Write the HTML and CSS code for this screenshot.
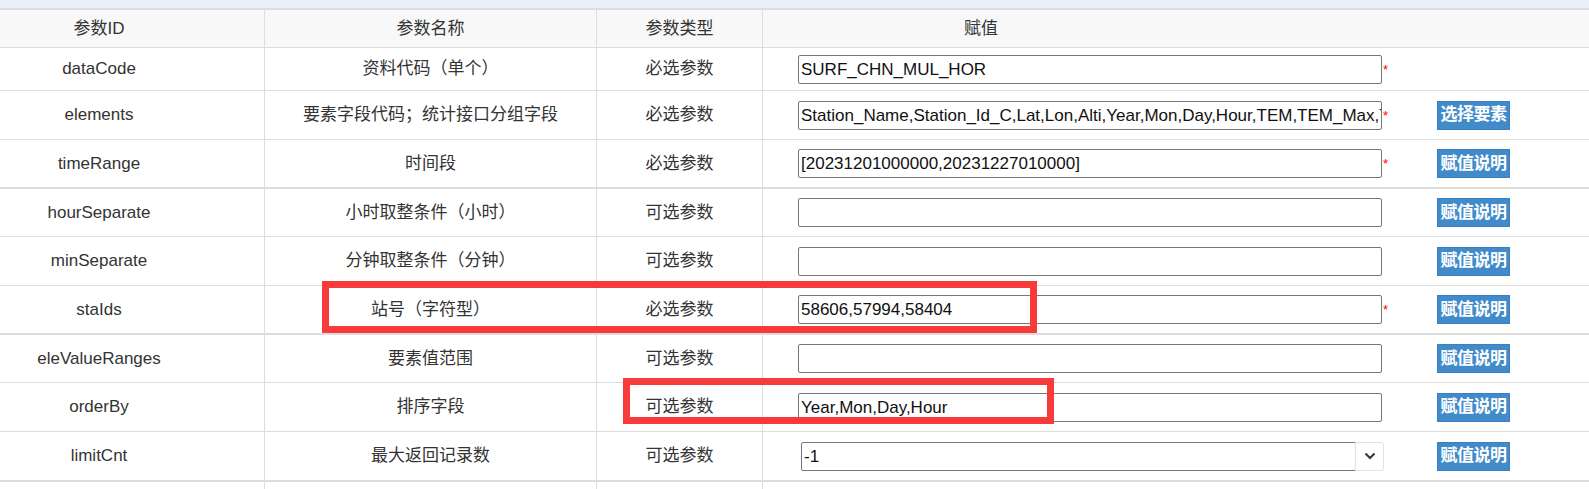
FILE: index.html
```html
<!DOCTYPE html>
<html lang="zh-CN">
<head>
<meta charset="utf-8">
<title>参数设置</title>
<link rel="stylesheet" href="styles.css">
</head>
<body>
<div class="page">
  <div class="topbar"></div>
  <div class="grid">
    <div class="row head">
      <div class="cell">参数ID</div>
      <div class="cell">参数名称</div>
      <div class="cell">参数类型</div>
      <div class="cell value-head">赋值</div>
      <div class="cell last"></div>
    </div>

    <div class="row short">
      <div class="cell">dataCode</div>
      <div class="cell">资料代码（单个）</div>
      <div class="cell">必选参数</div>
      <div class="cell value"><div class="wrap"><div class="field">SURF_CHN_MUL_HOR</div><span class="req">*</span></div></div>
      <div class="cell last"></div>
    </div>

    <div class="row x">
      <div class="cell">elements</div>
      <div class="cell">要素字段代码；统计接口分组字段</div>
      <div class="cell">必选参数</div>
      <div class="cell value"><div class="wrap"><div class="field">Station_Name,Station_Id_C,Lat,Lon,Alti,Year,Mon,Day,Hour,TEM,TEM_Max,TEM_Min</div><span class="req">*</span></div></div>
      <div class="cell last"><span class="btn">选择要素</span></div>
    </div>

    <div class="row end">
      <div class="cell">timeRange</div>
      <div class="cell">时间段</div>
      <div class="cell">必选参数</div>
      <div class="cell value"><div class="wrap"><div class="field">[20231201000000,20231227010000]</div><span class="req">*</span></div></div>
      <div class="cell last"><span class="btn">赋值说明</span></div>
    </div>

    <div class="row">
      <div class="cell">hourSeparate</div>
      <div class="cell">小时取整条件（小时）</div>
      <div class="cell">可选参数</div>
      <div class="cell value"><div class="wrap"><div class="field"></div></div></div>
      <div class="cell last"><span class="btn">赋值说明</span></div>
    </div>

    <div class="row x">
      <div class="cell">minSeparate</div>
      <div class="cell">分钟取整条件（分钟）</div>
      <div class="cell">可选参数</div>
      <div class="cell value"><div class="wrap"><div class="field"></div></div></div>
      <div class="cell last"><span class="btn">赋值说明</span></div>
    </div>

    <div class="row end">
      <div class="cell">staIds</div>
      <div class="cell">站号（字符型）</div>
      <div class="cell">必选参数</div>
      <div class="cell value"><div class="wrap"><div class="field">58606,57994,58404</div><span class="req">*</span></div></div>
      <div class="cell last"><span class="btn">赋值说明</span></div>
    </div>

    <div class="row">
      <div class="cell">eleValueRanges</div>
      <div class="cell">要素值范围</div>
      <div class="cell">可选参数</div>
      <div class="cell value"><div class="wrap"><div class="field"></div></div></div>
      <div class="cell last"><span class="btn">赋值说明</span></div>
    </div>

    <div class="row x">
      <div class="cell">orderBy</div>
      <div class="cell">排序字段</div>
      <div class="cell">可选参数</div>
      <div class="cell value"><div class="wrap"><div class="field">Year,Mon,Day,Hour</div></div></div>
      <div class="cell last"><span class="btn">赋值说明</span></div>
    </div>

    <div class="row end x">
      <div class="cell">limitCnt</div>
      <div class="cell">最大返回记录数</div>
      <div class="cell">可选参数</div>
      <div class="cell value">
        <div class="combo">
          <div class="combo-text">-1</div>
          <div class="combo-arrow">
            <svg width="12" height="8" viewBox="0 0 12 8"><path d="M1.5 1.5 L6 6 L10.5 1.5" fill="none" stroke="#333" stroke-width="2"/></svg>
          </div>
        </div>
      </div>
      <div class="cell last"><span class="btn">赋值说明</span></div>
    </div>

    <div class="row tail">
      <div class="cell"></div>
      <div class="cell"></div>
      <div class="cell"></div>
      <div class="cell value"></div>
      <div class="cell last"></div>
    </div>
  </div>

  <div class="mark mark-1"></div>
  <div class="mark mark-2"></div>
</div>
</body>
</html>
```

FILE: styles.css
```css
* { box-sizing: border-box; }

html, body {
  margin: 0;
  padding: 0;
  background: #fff;
}

body {
  overflow: hidden;
  font-family: "Liberation Sans", "Noto Sans CJK SC", sans-serif;
  font-size: 17px;
  color: #333;
}

.page {
  position: relative;
  width: 1589px;
  height: 489px;
  overflow: hidden;
}

.topbar {
  height: 8px;
  background: #e8f0fa;
}

.grid {
  margin-left: -66px;
  width: 1655px;
  border-top: 2px solid #dcdcdc;
}

.row {
  display: grid;
  grid-template-columns: 331px 332px 166px 647px 1fr;
  height: 48px;
  border-bottom: 1px solid #ddd;
}

.row.head {
  height: 38px;
  background: #f8f8f8;
}

.row.short { height: 43px; }
.row.x { height: 49px; }
.row.end { height: 49px; border-bottom-width: 2px; }
.row.end.x { height: 50px; }
.row.tail { height: 30px; border-bottom: none; }

.cell {
  display: flex;
  align-items: center;
  justify-content: center;
  border-right: 1px solid #ddd;
  line-height: 20px;
  white-space: nowrap;
  overflow: hidden;
}

.cell.value,
.cell.value-head,
.cell.last {
  border-right: none;
}

.cell.value-head {
  justify-content: flex-start;
  padding-left: 201px;
}

.cell.value {
  justify-content: flex-start;
  padding-left: 35px;
}

.cell.last {
  justify-content: flex-start;
  padding-left: 27px;
}

.wrap {
  display: flex;
  align-items: flex-start;
}

.field {
  width: 584px;
  height: 29px;
  border: 1px solid #767676;
  border-radius: 2px;
  padding: 0 2px;
  color: #111;
  line-height: 27px;
  white-space: nowrap;
  overflow: hidden;
  background: #fff;
}

.req {
  margin-top: 8px;
  margin-left: 1px;
  color: #f00;
  font-size: 13px;
  line-height: 13px;
}

.btn {
  display: inline-flex;
  align-items: center;
  justify-content: center;
  width: 73px;
  height: 29px;
  background: #428bca;
  border: 1px solid #3b7fc0;
  color: #fff;
  font-weight: bold;
  font-size: 17px;
  letter-spacing: -0.5px;
}

.combo {
  display: flex;
  margin-left: 3px;
  height: 29px;
}

.combo-text {
  width: 555px;
  height: 29px;
  border: 1px solid #767676;
  border-radius: 2px 0 0 2px;
  padding: 0 2px;
  color: #111;
  line-height: 27px;
}

.combo-arrow {
  width: 29px;
  height: 29px;
  margin-left: -1px;
  border: 1px solid #e2e2e2;
  border-radius: 0 3px 3px 0;
  display: flex;
  align-items: center;
  justify-content: center;
  background: #fff;
}

.mark {
  position: absolute;
  border: 7px solid #f83a3a;
}

.mark-1 {
  left: 322px;
  top: 281px;
  width: 715px;
  height: 52px;
}

.mark-2 {
  left: 623px;
  top: 378px;
  width: 431px;
  height: 46px;
}
```
